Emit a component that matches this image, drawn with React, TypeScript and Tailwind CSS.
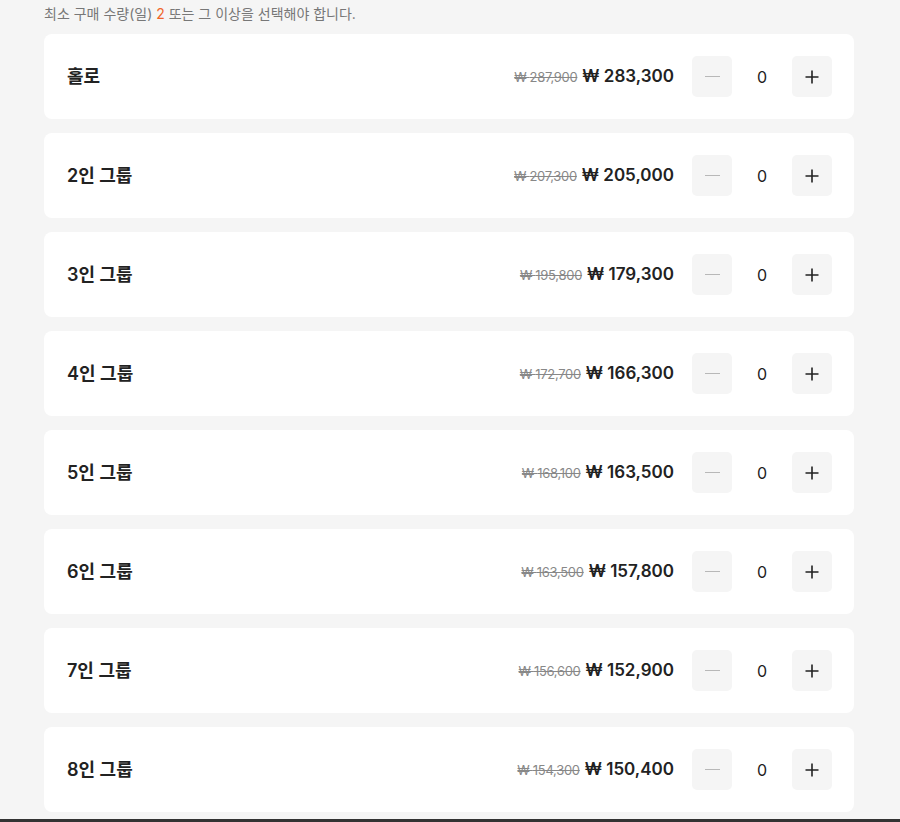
import React, { useState } from "react";

const items = [
  { name: "홀로", old: "287,900", price: "283,300" },
  { name: "2인 그룹", old: "207,300", price: "205,000" },
  { name: "3인 그룹", old: "195,800", price: "179,300" },
  { name: "4인 그룹", old: "172,700", price: "166,300" },
  { name: "5인 그룹", old: "168,100", price: "163,500" },
  { name: "6인 그룹", old: "163,500", price: "157,800" },
  { name: "7인 그룹", old: "156,600", price: "152,900" },
  { name: "8인 그룹", old: "154,300", price: "150,400" },
];

const font = "font-['Inter','Noto_Sans_CJK_KR',sans-serif]";

function Row({ name, old, price }: { name: string; old: string; price: string }) {
  const [count, setCount] = useState(0);
  return (
    <div className="flex h-[85px] items-center justify-between rounded-lg bg-white pl-[23px] pr-[22px]">
      <div className="text-[18px] font-semibold text-[#222]">{name}</div>
      <div className="flex items-center">
        <div className="flex items-baseline gap-[5px]">
          <span className="text-[13px] tracking-[-0.3px] text-[#888] line-through">₩ {old}</span>
          <span className="text-[17px] font-semibold text-[#222]">₩ {price}</span>
        </div>
        <div className="ml-[18px] flex items-center">
          <button
            onClick={() => setCount(Math.max(0, count - 1))}
            className="flex h-[41px] w-[40px] items-center justify-center rounded-[5px] bg-[#f5f5f5]"
          >
            <span className="block h-[1.5px] w-[15px] bg-[#b8b8b8]" />
          </button>
          <div className="w-[60px] text-center text-[16px] text-[#222]">{count}</div>
          <button
            onClick={() => setCount(count + 1)}
            className="flex h-[41px] w-[40px] items-center justify-center rounded-[5px] bg-[#f5f5f5]"
          >
            <svg width="14" height="14" viewBox="0 0 14 14">
              <path d="M7 0.5v13M0.5 7h13" stroke="#222" strokeWidth="1.6" />
            </svg>
          </button>
        </div>
      </div>
    </div>
  );
}

export default function App() {
  return (
    <div className={`${font} min-h-[822px] bg-[#f5f5f5] flex flex-col`}>
      <div className="pl-[44px] pr-[46px] pt-[4px]">
        <p className="h-[20px] text-[14px] leading-[20px] text-[#777]">
          최소 구매 수량(일) <span className="text-[#f0652b]">2</span> 또는 그 이상을 선택해야 합니다.
        </p>
        <div className="mt-[10px] flex flex-col gap-[14px]">
          {items.map((it) => (
            <Row key={it.name} {...it} />
          ))}
        </div>
      </div>
      <div className="mt-auto h-[3px] bg-[#333]" />
    </div>
  );
}
